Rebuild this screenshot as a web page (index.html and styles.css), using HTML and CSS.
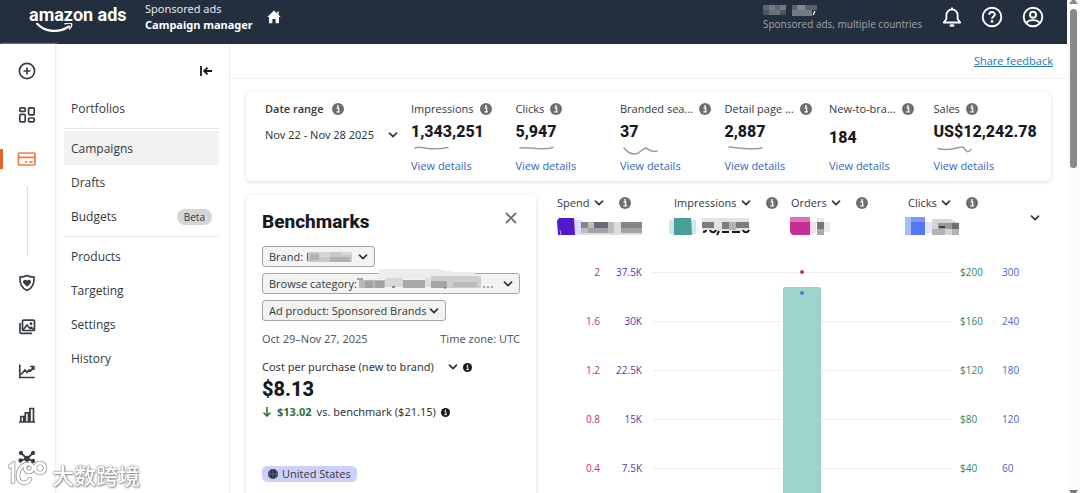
FILE: index.html
```html
<!DOCTYPE html>
<html lang="en">
<head>
    <meta charset="UTF-8">
    <meta name="viewport" content="width=device-width, initial-scale=1.0">
    <title>Campaign manager</title>
    <link rel="stylesheet" href="styles.css">
</head>
<body>
    <!-- Shared icons -->
    <svg class="sprite" aria-hidden="true">
        <symbol id="info" viewBox="0 0 12 12">
            <circle cx="6" cy="6" r="6" fill="currentColor"/>
            <path d="M4.6 5h2v3.6M4.4 8.8h3.4" fill="none" stroke="#fff" stroke-width="1.3"/>
            <circle cx="6" cy="3" r="0.9" fill="#fff"/>
        </symbol>
        <symbol id="chevron" viewBox="0 0 10 10">
            <path d="M1.5 3.2 5 6.7l3.5-3.5" fill="none" stroke="currentColor" stroke-width="1.7" stroke-linecap="round" stroke-linejoin="round"/>
        </symbol>
    </svg>

    <div class="page">
        <div class="app">
            <header class="topbar">
                <a class="logo" href="#">
                    <span class="logo-text">amazon ads</span>
                    <svg class="logo-smile" width="38" height="12" viewBox="0 0 38 12" fill="none" stroke="#fff" stroke-linecap="round">
                        <path d="M1 .5C9 9.500 23 10 33 3.500" stroke-width="2.200"/>
                        <path d="M29 .8C32 0 35 0 35.500 .8C36 2 35 4.500 33.500 6" stroke-width="1.400"/>
                    </svg>
                </a>
                <div class="product">
                    <span>Sponsored ads</span>
                    <strong>Campaign manager</strong>
                </div>
                <a class="home" href="#" aria-label="Home">
                    <svg width="14" height="14" viewBox="0 0 14 14" fill="#fff">
                        <path d="M7 .6 13.700 7H12v6.200H8.600V9H5.400v4.200H2V7H.3z"/>
                        <path d="M10.300 1.500h1.500v3h-1.500z"/>
                    </svg>
                </a>
                <div class="account">
                    <svg width="56" height="11" viewBox="0 0 56 11">
                        <path d="M0 0h23v5H0z" fill="#5d6570"/><path d="M6 0h6v5H6zM17 0h6v5h-6z" fill="#737a84"/>
                        <path d="M0 5h23v5H0z" fill="#4a535f"/><path d="M6 5h11v5H6z" fill="#69717b"/>
                        <path d="M29 0h25v5H29z" fill="#59616d"/><path d="M34 0h8v5h-8z" fill="#80868f"/>
                        <path d="M29 5h20v6H29z" fill="#737a84"/><path d="m52 6-2 4" stroke="#fff" stroke-width="1.200"/>
                    </svg>
                    <span>Sponsored ads, multiple countries</span>
                </div>
                <div class="tools">
                    <button type="button" aria-label="Notifications">
                        <svg width="20" height="22" viewBox="0 0 20 22" fill="none" stroke="#fff" stroke-width="1.800" stroke-linejoin="round" stroke-linecap="round">
                            <path d="M10 2.200v1.300M1.800 16.500h16.400L15.600 13V9a5.600 5.600 0 0 0-11.200 0v4z"/>
                            <path d="M8.800 19.500h2.400" stroke-width="2.400"/>
                        </svg>
                    </button>
                    <button type="button" aria-label="Help">
                        <svg width="22" height="22" viewBox="0 0 22 22" fill="none" stroke="#fff" stroke-width="1.900">
                            <circle cx="11" cy="11" r="9.300"/>
                            <path d="M8.200 8.800c0-3.700 5.700-3.500 5.700-.3 0 2-2.900 2.200-2.900 4.300"/>
                            <circle cx="11" cy="15.400" r=".5"/>
                        </svg>
                    </button>
                    <button type="button" aria-label="Account">
                        <svg width="22" height="22" viewBox="0 0 22 22" fill="none" stroke="#fff" stroke-width="1.900">
                            <circle cx="11" cy="11" r="9.300"/>
                            <circle cx="11" cy="8.700" r="3"/>
                            <path d="M4.500 17.300c1.300-4.200 11.700-4.200 13 0"/>
                        </svg>
                    </button>
                </div>
            </header>

            <div class="body">
                <nav class="rail" aria-label="Products">
                    <a href="#" aria-label="Create">
                        <svg width="18" height="18" viewBox="0 0 18 18"><circle cx="9" cy="9" r="7.600"/><path d="M9 5.500v7M5.500 9h7"/></svg>
                    </a>
                    <a href="#" aria-label="Dashboard">
                        <svg width="18" height="18" viewBox="0 0 18 18"><rect x="1.800" y="1.800" width="5.400" height="3.600" rx="1"/><rect x="1.800" y="8.400" width="5.400" height="7.400" rx="1"/><rect x="10.600" y="1.800" width="5.600" height="7" rx="1"/><rect x="10.600" y="12" width="5.600" height="3.800" rx="1"/></svg>
                    </a>
                    <a class="active" href="#" aria-label="Sponsored ads">
                        <svg width="20" height="16" viewBox="0 0 20 16"><rect x="1.500" y="2" width="16.500" height="12" rx="1.200"/><path d="M1.500 6.300H18M8 10.800h2M12.500 10.800h3"/></svg>
                    </a>
                    <div class="rail-line"></div>
                    <a href="#" aria-label="Brand safety">
                        <svg width="18" height="18" viewBox="0 0 18 18"><path d="M9 1.500c2 1.200 4.500 1.600 7 1.600.4 6-1.500 11-7 13.400C3.500 14.100 1.600 9.100 2 3.100c2.500 0 5-.4 7-1.600z"/><path class="solid heart" d="M9 12.800 5.200 9C4 6.500 7.500 4.500 9 6.800c1.500-2.300 5-.3 3.800 2.200z"/></svg>
                    </a>
                    <a href="#" aria-label="Creative assets">
                        <svg width="18" height="18" viewBox="0 0 18 18"><rect x="4.500" y="2.200" width="12" height="10.300" rx="1"/><path d="M2 5v9.300c0 .7.300 1 1 1h11M5 12l4-5 3 3.500 1.500-1.200 2.500 2.700"/><circle class="solid" cx="13" cy="5.800" r=".6"/></svg>
                    </a>
                    <a href="#" aria-label="Measurement">
                        <svg width="18" height="18" viewBox="0 0 18 18"><path d="M1.800 2.500v13h15M3 12.500l4-4.500 2 2.500 2-2.500 1.500 1L15.500 5M12 4.500h3.800v3.500"/></svg>
                    </a>
                    <a href="#" aria-label="Reports">
                        <svg width="18" height="18" viewBox="0 0 18 18"><path d="M1 16h16M2.800 16v-5.500h3V16M7.300 16V6.800h3.200V16M12 16V2.500h3.500V16"/></svg>
                    </a>
                    <a href="#" aria-label="Audiences">
                        <svg width="18" height="18" viewBox="0 0 18 18"><path d="m3.500 3.500 5.500 5M14.500 3.500 9 8.500M9 8.500 3 10.500M9 8.500l5.500 2.500M9 8.500V15"/><circle cx="9" cy="8.500" r="2"/><circle class="solid" cx="3" cy="3" r="1.300"/><circle class="solid" cx="15" cy="3" r="1.300"/><circle class="solid" cx="2.500" cy="10.500" r="1.300"/><circle class="solid" cx="15" cy="11" r="1.300"/><circle class="solid" cx="9" cy="15.500" r="1.300"/></svg>
                    </a>
                </nav>

                <nav class="sidebar" aria-label="Campaign manager">
                    <button type="button" class="collapse" aria-label="Collapse menu">
                        <svg width="14" height="12" viewBox="0 0 14 12" fill="none" stroke="#16191f" stroke-width="1.800"><path d="M2 1v10M13 6H5.500M8.500 2.600 5.100 6l3.400 3.400"/></svg>
                    </button>
                    <a href="#">Portfolios</a>
                    <hr>
                    <a class="active" href="#">Campaigns</a>
                    <a href="#">Drafts</a>
                    <a href="#">Budgets <span class="beta">Beta</span></a>
                    <hr>
                    <a href="#">Products</a>
                    <a href="#">Targeting</a>
                    <a href="#">Settings</a>
                    <a href="#">History</a>
                </nav>

                <main class="main">
                    <div class="feedback"><a href="#">Share feedback</a></div>

                    <section class="summary card">
                        <div class="date-range">
                            <label for="date-range">Date range <svg class="info"><use href="#info"/></svg></label>
                            <span class="select plain wide">
                                <select id="date-range"><option>Nov 22 - Nov 28 2025</option></select>
                                <svg class="chevron"><use href="#chevron"/></svg>
                            </span>
                        </div>
                        <div class="stat">
                            <div class="stat-label"><span>Impressions</span><svg class="info"><use href="#info"/></svg></div>
                            <div class="stat-value">1,343,251
                                <svg class="trend" viewBox="0 0 40 12"><path d="M4 4c4-2 8 0 13 .5S30 5 37 3.500"/></svg>
                            </div>
                            <a href="#">View details</a>
                        </div>
                        <div class="stat">
                            <div class="stat-label"><span>Clicks</span><svg class="info"><use href="#info"/></svg></div>
                            <div class="stat-value">5,947
                                <svg class="trend" viewBox="0 0 40 12"><path d="M4 4c6-.5 10 0 16 .5s12 .5 17-1"/></svg>
                            </div>
                            <a href="#">View details</a>
                        </div>
                        <div class="stat">
                            <div class="stat-label"><span>Branded sea...</span><svg class="info"><use href="#info"/></svg></div>
                            <div class="stat-value">37
                                <svg class="trend" viewBox="0 0 40 12"><path d="M4 4c3 4 7 6 11 6s7-5 11-6c3 1 4 5 11 3"/></svg>
                            </div>
                            <a href="#">View details</a>
                        </div>
                        <div class="stat">
                            <div class="stat-label"><span>Detail page ...</span><svg class="info"><use href="#info"/></svg></div>
                            <div class="stat-value">2,887
                                <svg class="trend" viewBox="0 0 40 12"><path d="M4 3c5 0 9 1.500 15 1.500s12 1 18-.5"/></svg>
                            </div>
                            <a href="#">View details</a>
                        </div>
                        <div class="stat">
                            <div class="stat-label"><span>New-to-bra...</span><svg class="info"><use href="#info"/></svg></div>
                            <div class="stat-value">184</div>
                            <a href="#">View details</a>
                        </div>
                        <div class="stat">
                            <div class="stat-label"><span>Sales</span><svg class="info"><use href="#info"/></svg></div>
                            <div class="stat-value">US$12,242.78
                                <svg class="trend" viewBox="0 0 40 12"><path d="M4 4.500c6 1.500 12 1 17 0s7-3 9-.5 3 6 7 1.500"/></svg>
                            </div>
                            <a href="#">View details</a>
                        </div>
                    </section>

                    <div class="columns">
                        <section class="benchmarks card">
                            <div class="benchmarks-head">
                                <h2>Benchmarks</h2>
                                <button type="button" aria-label="Close">
                                    <svg width="12" height="12" viewBox="0 0 12 12" stroke="#6b7078" stroke-width="1.800"><path d="m1 1 10 10M11 1 1 11"/></svg>
                                </button>
                            </div>
                            <div class="filters">
                                <span class="select brand">
                                    <select aria-label="Brand"><option>Brand: K</option></select>
                                    <svg class="mask" width="44" height="10" viewBox="0 0 44 10">
                                        <path d="M0 0h44v10H0z" fill="#c9c9c9"/><path d="M2 2h9v6H2zM22 5h20v5H22z" fill="#b2b2b2"/><path d="M11 0h11v5H11zM33 0h11v3H33z" fill="#d6d6d6"/>
                                    </svg>
                                    <svg class="chevron"><use href="#chevron"/></svg>
                                </span>
                                <span class="select category">
                                    <select aria-label="Browse category"><option>Browse category:</option></select>
                                    <svg class="mask" width="140" height="23" viewBox="0 0 140 23">
                                        <path d="M22 1h60l15 3h20l6 7H22z" fill="#ececea"/>
                                        <path d="M2 12h26v8H2z" fill="#b9b9b9"/><path d="M8 13h8v7H8zM18 13h9v7h-9z" fill="#a3a3a3"/>
                                        <path d="M28 10h18v9H28z" fill="#d8d8d6"/><path d="M35 19h3" stroke="#333"/>
                                        <path d="M46 12h22v8H46z" fill="#a8a8a8"/><path d="M68 10h6v9h-6z" fill="#dedede"/>
                                        <path d="M74 8h50v12H74z" fill="#cfcfcd"/><path d="M74 13h16v7H74z" fill="#a5a5a5"/><path d="M96 14h24v5H96z" fill="#bcbcbc"/>
                                        <path d="M0 11h6M88 21v-2M126 19h2M130 19h2M134 19h2" stroke="#555"/>
                                    </svg>
                                    <svg class="chevron"><use href="#chevron"/></svg>
                                </span>
                                <span class="select">
                                    <select aria-label="Ad product"><option>Ad product: Sponsored Brands</option></select>
                                    <svg class="chevron"><use href="#chevron"/></svg>
                                </span>
                            </div>
                            <div class="period"><span>Oct 29–Nov 27, 2025</span><span>Time zone: UTC</span></div>
                            <div class="metric-pick">
                                <span class="select plain wide">
                                    <select aria-label="Benchmark metric"><option>Cost per purchase (new to brand)</option></select>
                                    <svg class="chevron"><use href="#chevron"/></svg>
                                </span>
                                <svg class="info dark"><use href="#info"/></svg>
                            </div>
                            <div class="cost">$8.13</div>
                            <div class="versus">
                                <svg width="10" height="10" viewBox="0 0 10 10" fill="none" stroke="#2f7038" stroke-width="1.600"><path d="M5 0v9M1.500 5.500 5 9l3.500-3.500"/></svg>
                                <strong>$13.02</strong> vs. benchmark ($21.15)
                                <svg class="info dark"><use href="#info"/></svg>
                            </div>
                            <span class="country">
                                <svg width="10" height="10" viewBox="0 0 10 10"><circle cx="5" cy="5" r="5" fill="#232f3e"/><path d="M0 5h10M5 0v10M2.500 1C1.500 4 1.500 6 2.500 9M7.500 1c1 3 1 5 0 8" fill="none" stroke="#7c83b5" stroke-width=".6"/></svg>
                                United States
                            </span>
                        </section>

                        <section class="performance">
                            <div class="metrics">
                                <div class="metric">
                                    <span class="select plain"><select aria-label="Metric 1"><option>Spend</option></select><svg class="chevron"><use href="#chevron"/></svg></span>
                                    <svg class="info"><use href="#info"/></svg>
                                    <svg class="metric-value" viewBox="0 0 90 22">
                                        <path d="M16 3h9v15h-9z" fill="#e2d8f7"/><path d="M2 1h15l1 17H1L0 4z" fill="#5119cf"/><path d="m3 13 1 5" stroke="#b79df0"/>
                                        <path d="M24 5h61v11H24z" fill="#bdbdbd"/><path d="M24 5h7v6h-7zM64 5h21v6H64z" fill="#858585"/><path d="M37 5h14v7H37z" fill="#696c78"/><path d="M31 11h20v7H31zM64 11h21v5H64z" fill="#a3a3a3"/><path d="M57 5h7v11h-7z" fill="#dcdcdc"/><path d="M24 16h61v2H24z" fill="#ddd"/>
                                    </svg>
                                </div>
                                <div class="metric">
                                    <span class="select plain"><select aria-label="Metric 2"><option>Impressions</option></select><svg class="chevron"><use href="#chevron"/></svg></span>
                                    <svg class="info"><use href="#info"/></svg>
                                    <svg class="metric-value" viewBox="0 0 90 22">
                                        <path d="M-5 3h27v14H-5z" fill="#c9ebe7"/><path d="M0 1h17l1 17H0z" fill="#479f98"/>
                                        <path d="M28 1h47v13H28z" fill="#e2e2e2"/><path d="M28 5h12v6H28zM48 5h7v7h-7zM62 5h13v6H62z" fill="#7b7b82"/><path d="M55 5h7v8h-7z" fill="#b5b5b5"/>
                                        <path d="M29 15c2 0 3-1 3-2M36 13c1 3 5 3 6 0M45 14l-2 4M48 15h7M58 15h8M69 13c1 3 5 3 6 0" fill="none" stroke="#16191f" stroke-width="2"/>
                                    </svg>
                                </div>
                                <div class="metric">
                                    <span class="select plain"><select aria-label="Metric 3"><option>Orders</option></select><svg class="chevron"><use href="#chevron"/></svg></span>
                                    <svg class="info"><use href="#info"/></svg>
                                    <svg class="metric-value" viewBox="0 0 90 22">
                                        <path d="M-1 0h20v5H-1z" fill="#dd73bb"/><path d="M19 5h6v11h-6z" fill="#f8dced"/><path d="M-1 5h20v13H1l-2-3z" fill="#c52e92"/>
                                        <path d="M26 1h7v5h-7zM33 5h6v10h-6z" fill="#e9e9e9"/><path d="M26 5h7v7h-7z" fill="#747474"/><path d="M26 12h7v6h-7z" fill="#a9a9a9"/>
                                    </svg>
                                </div>
                                <div class="metric">
                                    <span class="select plain"><select aria-label="Metric 4"><option>Clicks</option></select><svg class="chevron"><use href="#chevron"/></svg></span>
                                    <svg class="info"><use href="#info"/></svg>
                                    <svg class="metric-value" viewBox="0 0 90 22">
                                        <path d="M-3 0h20v18H-3z" fill="#aabcf7"/><path d="M3 0h14v5H3z" fill="#7d97f6"/><path d="M3 5h14v13H3z" fill="#5577ef"/><path d="M17 5h7v11h-7z" fill="#dfe5fc"/>
                                        <path d="M24 2h18l9 4v12H24z" fill="#d4d4d4"/><path d="M30 6h21v6H30z" fill="#9a9a9a"/><path d="M44 6h7v6h-7z" fill="#6f6f6f"/><path d="M24 12h13v6H24zM44 12h7v6h-7z" fill="#b2b2b2"/><path d="M31 10h6" stroke="#222" stroke-width="1.500"/>
                                    </svg>
                                </div>
                                <button type="button" class="more" aria-label="Show more metrics"><svg class="chevron"><use href="#chevron"/></svg></button>
                            </div>

                            <div class="chart">
                                <div class="axis orders"><span>2</span><span>1.6</span><span>1.2</span><span>0.8</span><span>0.4</span></div>
                                <div class="axis impressions"><span>37.5K</span><span>30K</span><span>22.5K</span><span>15K</span><span>7.5K</span></div>
                                <div class="plot">
                                    <i></i><i></i><i></i><i></i><i></i>
                                    <div class="bar"></div>
                                    <div class="dot dot-orders"></div>
                                    <div class="dot dot-clicks"></div>
                                </div>
                                <div class="axis spend"><span>$200</span><span>$160</span><span>$120</span><span>$80</span><span>$40</span></div>
                                <div class="axis clicks"><span>300</span><span>240</span><span>180</span><span>120</span><span>60</span></div>
                            </div>
                        </section>
                    </div>
                </main>
            </div>
        </div>

        <div class="scrollbar">
            <svg width="9" height="4" viewBox="0 0 9 4"><path d="M0 4 3 0h3l3 4z" fill="#8b8b8b"/></svg>
            <div class="thumb"></div>
            <svg width="9" height="3" viewBox="0 0 9 3"><path d="M0 0h9L7 3H2z" fill="#777"/></svg>
        </div>
    </div>

    <div class="watermark">
        <svg width="40" height="26" viewBox="0 0 40 26" fill="none" stroke-linecap="round">
            <g stroke="#a2a2a2" stroke-width="4.600"><path d="M2 5.500 5 3v18M22 18c-3 6-12 5-12-3 0-6 3-10 8-12"/><circle cx="21" cy="7" r="4"/><circle cx="32" cy="7" r="5"/></g>
            <g stroke="#fff" stroke-width="2.800"><path d="M2 5.500 5 3v18M22 18c-3 6-12 5-12-3 0-6 3-10 8-12"/><circle cx="21" cy="7" r="4"/><circle cx="32" cy="7" r="5"/></g>
        </svg>
        <span lang="zh">大数跨境</span>
    </div>
</body>
</html>
```

FILE: styles.css
```css
* {
    box-sizing: border-box;
}
body {
    margin: 0;
    font-family: "Open Sans", "Noto Sans", sans-serif;
    font-size: 11px;
    line-height: 16px;
    color: #333840;
    background: #fff;
}
a {
    color: inherit;
    text-decoration: none;
}
button {
    display: flex;
    padding: 0;
    border: none;
    background: none;
    color: inherit;
    cursor: pointer;
}
svg {
    display: block;
    flex: none;
}
.sprite {
    position: absolute;
    width: 0;
    height: 0;
}
.page {
    display: flex;
    height: 100vh;
    overflow: hidden;
}
.app {
    flex: 1;
    min-width: 0;
    display: flex;
    flex-direction: column;
}

/* Top bar */
.topbar {
    display: flex;
    flex: none;
    height: 44px;
    padding: 0 23px 0 29px;
    background: #232f3e;
    color: #fff;
}
.logo {
    width: 116px;
    padding-top: 6px;
}
.logo-text {
    display: block;
    font-family: Roboto, sans-serif;
    font-size: 18px;
    font-weight: 700;
    line-height: 17px;
    white-space: nowrap;
}
.logo-smile {
    margin-left: 7px;
}
.product {
    display: flex;
    flex-direction: column;
    padding-top: 1px;
    font-family: "Noto Sans", sans-serif;
    white-space: nowrap;
    color: #e6e8ea;
}
.product strong {
    color: #fff;
}
.home {
    margin: 10px 0 0 14px;
}
.account {
    margin-left: auto;
    padding-top: 5px;
    color: #a0a5ac;
    font-size: 10px;
    white-space: nowrap;
}
.tools {
    display: flex;
    align-items: flex-start;
    gap: 19px;
    margin-left: 20px;
    padding-top: 6px;
}

.body {
    display: flex;
    flex: 1;
    min-height: 0;
}

/* Icon rail */
.rail {
    display: flex;
    flex-direction: column;
    flex: none;
    gap: 24px;
    width: 56px;
    padding-top: 17px;
    border-right: 1px solid #f0f0f0;
    box-shadow: 1px 0 2px #f4f4f4;
}
.rail a {
    display: flex;
    align-items: center;
    justify-content: center;
    height: 20px;
    border-left: 3px solid transparent;
    padding-right: 4px;
}
.rail a.active {
    border-left-color: #e8632b;
}
.rail svg {
    fill: none;
    stroke: #383d45;
    stroke-width: 1.7;
}
.rail .active svg {
    stroke: #ee7d3b;
}
.rail .solid {
    fill: #383d45;
}
.rail .heart {
    stroke: none;
}
.rail-line {
    flex: none;
    width: 1px;
    height: 70px;
    margin: -7px 28px -7px 27px;
    background: #dcdcdc;
}

/* Sidebar */
.sidebar {
    flex: none;
    width: 174px;
    padding: 0 10px 0 8px;
    border-right: 1px solid #ececec;
}
.sidebar a {
    display: flex;
    align-items: center;
    justify-content: space-between;
    height: 34px;
    padding: 1px 7px 0;
    border-radius: 2px;
    font-size: 12px;
}
.sidebar a.active {
    background: #f3f2f0;
}
.sidebar hr {
    height: 1px;
    margin: 3px 0 2px;
    border: none;
    background: #e8e8e8;
}
.collapse {
    margin: 21px 6px 14px auto;
}
.beta {
    padding: 0 7px;
    border-radius: 8px;
    background: #d5d5d5;
    font-size: 10px;
}

/* Main */
.main {
    flex: 1;
    min-width: 0;
}
.feedback {
    height: 35px;
    margin-bottom: 13px;
    padding: 9px 14px;
    border-bottom: 1px solid #f1f1f1;
    text-align: right;
}
.feedback a {
    color: #2377b4;
    text-decoration: underline;
}
.card {
    border-radius: 5px;
    background: #fff;
    box-shadow: 0 1px 4px rgba(0, 0, 0, 0.14);
}
.info {
    width: 12px;
    height: 12px;
    color: #6e6e6e;
}
.info.dark {
    width: 9px;
    height: 9px;
    color: #16191f;
}
.chevron {
    width: 10px;
    height: 10px;
}

.select {
    display: inline-flex;
    position: relative;
    align-items: center;
    color: #333840;
}
.select select {
    appearance: none;
    width: 100%;
    height: 21px;
    margin: 0;
    padding: 0 18px 0 6px;
    border: 1px solid #a3a5a5;
    border-radius: 3px;
    background: #f3f3f1;
    color: inherit;
    font: inherit;
}
.select .chevron {
    position: absolute;
    right: 7px;
    pointer-events: none;
}
.select.plain select {
    height: 16px;
    padding: 0 14px 0 0;
    border: none;
    background: none;
}
.select.plain .chevron {
    right: 0;
}
.select.wide {
    font-family: "Noto Sans", sans-serif;
}
.select.wide select {
    padding-right: 24px;
}
.mask {
    position: absolute;
    pointer-events: none;
}

/* Summary */
.summary {
    display: grid;
    grid-template-columns: 146px repeat(6, 1fr);
    margin: 0 16px 14px;
    padding: 9px 13px 7px 19px;
}
.date-range label {
    display: flex;
    align-items: center;
    gap: 8px;
    margin-bottom: 10px;
    font-weight: 600;
}
.stat-label {
    display: flex;
    align-items: center;
    gap: 6px;
    white-space: nowrap;
}
.stat-value {
    display: flex;
    flex-direction: column;
    justify-content: center;
    height: 41px;
    color: #16191f;
    font-family: Roboto, sans-serif;
    font-size: 16px;
    font-weight: 800;
    line-height: 24px;
    white-space: nowrap;
}
.trend {
    width: 40px;
    height: 12px;
    fill: none;
    stroke: #9c9c9c;
    stroke-width: 1.5;
    stroke-linecap: round;
}
.stat a {
    color: #3268b8;
}

.columns {
    display: flex;
    margin: 0 16px;
}

/* Benchmarks */
.benchmarks {
    flex: none;
    width: 290px;
    height: 340px;
    padding: 15px 16px;
}
.benchmarks-head {
    display: flex;
    align-items: flex-start;
    justify-content: space-between;
}
.benchmarks-head h2 {
    margin: 0 0 12px;
    color: #16191f;
    font-family: Roboto, sans-serif;
    font-size: 19px;
    font-weight: 800;
    line-height: 24px;
}
.benchmarks-head button {
    margin: 2px 3px 0 0;
}
.filters {
    display: flex;
    flex-direction: column;
    align-items: flex-start;
    gap: 6px;
}
.brand {
    width: 113px;
}
.brand .mask {
    left: 46px;
}
.category {
    width: 100%;
}
.category .mask {
    left: 95px;
    bottom: 3px;
}
.period {
    display: flex;
    justify-content: space-between;
    margin: 10px 0 12px;
    color: #565b63;
    font-family: "Noto Sans", sans-serif;
}
.metric-pick {
    display: flex;
    align-items: center;
    gap: 5px;
}
.cost {
    color: #16191f;
    font-family: Roboto, sans-serif;
    font-size: 20px;
    font-weight: 800;
    line-height: 29px;
}
.versus {
    display: flex;
    align-items: center;
    gap: 5px;
    margin-bottom: 46px;
    font-family: "Noto Sans", sans-serif;
}
.versus strong {
    color: #2f7038;
}
.country {
    display: inline-flex;
    align-items: center;
    gap: 4px;
    padding: 0 6px;
    border-radius: 5px;
    background: #cdd0fa;
}

/* Performance chart */
.performance {
    flex: 1;
    min-width: 0;
}
.metrics {
    display: flex;
    position: relative;
    padding-left: 21px;
}
.metric {
    display: flex;
    flex-wrap: wrap;
    align-content: flex-start;
    align-items: center;
    column-gap: 15px;
    width: 117px;
    height: 53px;
}
.metric-value {
    width: 90px;
    height: 22px;
    margin-top: 6px;
    overflow: visible;
}
.more {
    position: absolute;
    right: 11px;
    top: 18px;
}
.chart {
    display: flex;
}
.axis {
    display: flex;
    flex-direction: column;
    font-size: 10px;
    line-height: 49px;
}
.axis.orders {
    width: 64px;
    text-align: right;
    color: #b83280;
}
.axis.impressions {
    width: 42px;
    text-align: right;
    color: #5b36b8;
}
.axis.spend {
    width: 42px;
    color: #2f8566;
}
.axis.clicks {
    width: 49px;
    color: #4668cc;
}
.plot {
    position: relative;
    flex: 1;
    margin: 0 8px 0 10px;
}
.plot i {
    display: block;
    height: 49px;
    background: linear-gradient(#efeff2, #efeff2) center / 100% 1px no-repeat;
}
.bar {
    position: absolute;
    left: calc(50% - 19px);
    top: 39px;
    bottom: 0;
    width: 38px;
    border-radius: 2px 2px 0 0;
    background: #9bd4cd;
}
.dot {
    position: absolute;
    left: calc(50% - 2px);
    width: 4px;
    height: 4px;
    border-radius: 50%;
}
.dot-orders {
    top: 22px;
    background: #bd3380;
}
.dot-clicks {
    top: 43px;
    background: #5577d4;
}

/* Scroll bar */
.scrollbar {
    display: flex;
    flex-direction: column;
    align-items: center;
    flex: none;
    width: 13px;
    background: #fcfcfc;
}
.thumb {
    width: 7px;
    height: 159px;
    margin: 5px 0 auto;
    border-radius: 4px;
    background: #898989;
}

.watermark {
    display: flex;
    position: fixed;
    left: 8px;
    bottom: 5px;
    align-items: center;
    gap: 4px;
    color: #fff;
    font-family: "Noto Sans CJK SC", sans-serif;
    font-size: 22px;
    font-weight: 500;
    line-height: 28px;
    text-shadow: 0 0 1px #777, 0 0 2px #888, 1px 1px 2px #999;
}
```
